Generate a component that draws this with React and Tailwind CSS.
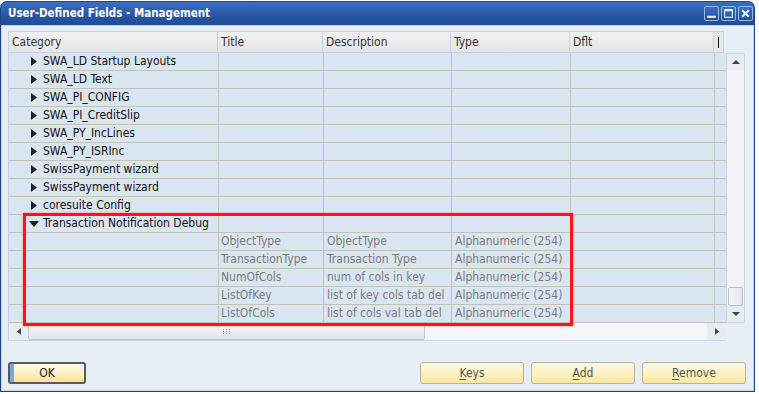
import React from 'react';

const font = { fontFamily: '"DejaVu Sans Condensed", "DejaVu Sans", sans-serif' };

const cols = [
  { key: 'cat', label: 'Category', w: 'w-[210px]' },
  { key: 'title', label: 'Title', w: 'w-[105px]' },
  { key: 'desc', label: 'Description', w: 'w-[128px]' },
  { key: 'type', label: 'Type', w: 'w-[119px]' },
  { key: 'dflt', label: 'Dflt', w: 'w-[144px]' },
];

const tables = [
  'SWA_LD Startup Layouts',
  'SWA_LD Text',
  'SWA_PI_CONFIG',
  'SWA_PI_CreditSlip',
  'SWA_PY_IncLines',
  'SWA_PY_ISRInc',
  'SwissPayment wizard',
  'SwissPayment wizard',
  'coresuite Config',
];

const fields = [
  ['ObjectType', 'ObjectType'],
  ['TransactionType', 'Transaction Type'],
  ['NumOfCols', 'num of cols in key'],
  ['ListOfKey', 'list of key cols tab del'],
  ['ListOfCols', 'list of cols val tab del'],
];

function Row({ cat, expanded, child }) {
  const cell = 'h-full border-r border-[#c8c1b2] shrink-0 overflow-hidden whitespace-nowrap';
  return (
    <div className="flex h-[18px] border-b border-[#c8c1b2] bg-[#dae5f2] text-[12px] leading-[17px]">
      <div className={`${cell} w-[210px] flex items-center`}>
        {cat && (
          <>
            {expanded ? (
              <svg width="10" height="6" viewBox="0 0 10 6" className="ml-[20px] mr-[4px]">
                <path d="M0 0h10L5 6z" fill="#1f1f1f" />
              </svg>
            ) : (
              <svg width="6" height="9" viewBox="0 0 6 9" className="ml-[22px] mr-[6px]">
                <path d="M0 0l6 4.5L0 9z" fill="#1f1f1f" />
              </svg>
            )}
            <span className="text-[#111]">{cat}</span>
          </>
        )}
      </div>
      <div className={`${cell} w-[105px] pl-[2px] text-[#7b7b7b]`}>{child && child[0]}</div>
      <div className={`${cell} w-[128px] pl-[3px] text-[#7b7b7b]`}>{child && child[1]}</div>
      <div className={`${cell} w-[119px] pl-[3px] text-[#7b7b7b]`}>{child && 'Alphanumeric (254)'}</div>
      <div className={`${cell} w-[144px]`}></div>
      <div className="h-full w-[11px] shrink-0"></div>
    </div>
  );
}

function Button({ label, className = '' }) {
  return (
    <button
      className={`h-[22px] rounded-[3px] border border-[#bdb08a] bg-gradient-to-b from-[#fffbe8] to-[#fbe7a0] text-[12px] text-[#555] ${className}`}
    >
      <span className="underline underline-offset-2">{label[0]}</span>
      {label.slice(1)}
    </button>
  );
}

export default function App() {
  return (
    <div className="w-[759px] h-[394px] bg-white overflow-hidden" style={font}>
      <div className="w-[755px] h-[391px] mt-[1px] flex flex-col rounded-t-[7px] bg-[#1d4690] p-[1px]">
        {/* title bar */}
        <div className="h-[23px] shrink-0 flex items-center justify-between rounded-t-[6px] bg-gradient-to-b from-[#3c6ec0] via-[#2a59a8] to-[#1f4b97] pl-[7px] pr-[1px]">
          <span className="text-white font-bold text-[11.5px]">User-Defined Fields - Management</span>
          <div className="flex gap-[2px]">
            {['min', 'max', 'close'].map((b) => (
              <div
                key={b}
                className="w-[15px] h-[15px] rounded-[2px] border border-[#9bb6e0] bg-gradient-to-b from-[#3e6fc0] to-[#214f9c] flex items-center justify-center"
              >
                <svg width="11" height="11" viewBox="0 0 10 10">
                  {b === 'min' && <rect x="1" y="7" width="8" height="2" fill="#e8eefa" />}
                  {b === 'max' && <path d="M1 1h8v8H1zM2 3v5h6V3z" fill="#e8eefa" fillRule="evenodd" />}
                  {b === 'close' && <path d="M2 2l6 6M8 2l-6 6" stroke="#e8eefa" strokeWidth="2" />}
                </svg>
              </div>
            ))}
          </div>
        </div>

        {/* body */}
        <div className="flex-1 bg-[#e8eef6] border border-[#c2d3ea] pt-[5px] pl-[6px] flex flex-col">
          <div className="w-[737px] flex flex-col">
            {/* header */}
            <div className="flex h-[22px] text-[12px] text-[#333]">
              {cols.map((c) => (
                <div
                  key={c.key}
                  className={`${c.w} shrink-0 h-full border-r border-b border-t border-[#bcd3ec] first:border-l bg-gradient-to-b from-[#f1f1f1] to-[#e5e5e5] pl-[3px] leading-[20px]`}
                >
                  {c.label}
                </div>
              ))}
              <div className="w-[10px] shrink-0 h-full border-r border-b border-t border-[#bcd3ec] bg-[#e7e7e7] flex items-center pl-[4px]">
                <div className="w-[1px] h-[11px] bg-[#111]" />
              </div>
            </div>

            <div className="flex">
              <div className="w-[718px] flex flex-col border-l border-[#bcd3ec]">
                {tables.map((t, i) => (
                  <Row key={i} cat={t} />
                ))}
                <Row cat="Transaction Notification Debug" expanded />
                {fields.map((f) => (
                  <Row key={f[0]} child={f} />
                ))}
                {/* horizontal scrollbar */}
                <div className="flex h-[18px] bg-[#f4f5f7] border-b border-[#c6d6ea]">
                  <div className="w-[19px] h-full bg-[#e8ecf1] flex items-center justify-center">
                    <svg width="4" height="7" viewBox="0 0 4 7">
                      <path d="M4 0L0 3.5 4 7z" fill="#3b4654" />
                    </svg>
                  </div>
                  <div className="w-[397px] h-full rounded-[2px] border border-[#bfc9d4] bg-gradient-to-b from-[#f6f7f9] to-[#dfe5ec] flex items-center justify-center">
                    <svg width="8" height="5" viewBox="0 0 8 5">
                      <path d="M0 0h1v1H0zM3 0h1v1H3zM6 0h1v1H6zM0 2h1v1H0zM3 2h1v1H3zM6 2h1v1H6zM0 4h1v1H0zM3 4h1v1H3zM6 4h1v1H6z" fill="#9aa6b4" />
                    </svg>
                  </div>
                  <div className="flex-1" />
                  <div className="w-[19px] h-full bg-[#e8ecf1] flex items-center justify-center">
                    <svg width="4" height="7" viewBox="0 0 4 7">
                      <path d="M0 0l4 3.5L0 7z" fill="#3b4654" />
                    </svg>
                  </div>
                </div>
              </div>

              {/* vertical scrollbar */}
              <div className="w-[19px] h-[270px] border border-[#c6d6ea] bg-[#f2f3f6] flex flex-col">
                <div className="h-[16px] bg-[#e8ecf1] flex items-center justify-center">
                  <svg width="8" height="4" viewBox="0 0 8 4">
                    <path d="M0 4L4 0l4 4z" fill="#3b4654" />
                  </svg>
                </div>
                <div className="flex-1" />
                <div className="h-[19px] mx-[1px] rounded-[2px] border border-[#b5c0cc] bg-gradient-to-r from-[#f2f4f7] to-[#e1e6ec]" />
                <div className="h-[16px] bg-[#e8ecf1] flex items-center justify-center">
                  <svg width="8" height="4" viewBox="0 0 8 4">
                    <path d="M0 0h8L4 4z" fill="#3b4654" />
                  </svg>
                </div>
              </div>
            </div>
          </div>

          {/* buttons */}
          <div className="flex items-center mt-[21px] w-[738px]">
            <button className="w-[78px] h-[22px] rounded-[3px] border-2 border-[#5a5a5a] bg-gradient-to-b from-[#fffbe8] to-[#fbe39a] text-[12px] text-[#222] relative overflow-hidden">
              <span className="absolute left-0 top-0 bottom-0 w-[4px] bg-[#7fa6dc]" />
              OK
            </button>
            <div className="flex-1" />
            <div className="flex gap-[7px]">
              <Button label="Keys" className="w-[104px]" />
              <Button label="Add" className="w-[104px]" />
              <Button label="Remove" className="w-[104px]" />
            </div>
          </div>
        </div>
      </div>

      {/* annotation box */}
      <div className="absolute left-[23px] top-[213px] w-[550px] h-[113px] border-[3px] border-[#ff1414] shadow-[0_0_2px_#ff8080] pointer-events-none" />
    </div>
  );
}
